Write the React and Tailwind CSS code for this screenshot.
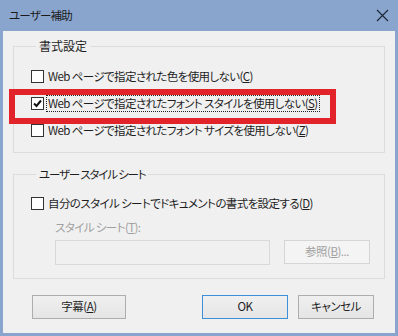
import React from 'react';

const font = { fontFamily: '"Segoe UI", "Noto Sans CJK JP", "Noto Sans", sans-serif' };

function Box({ checked, children, focused }) {
  return (
    <div className="flex items-center h-[16px]">
      <div className="w-[13px] h-[13px] border border-[#333] bg-white flex items-center justify-center shrink-0">
        {checked && (
          <svg width="9" height="9" viewBox="0 0 9 9">
            <path d="M1 4.5 L3.5 7 L8 1.5" fill="none" stroke="#111" strokeWidth="2" />
          </svg>
        )}
      </div>
      <span
        className={
          'ml-[2px] px-[1px] leading-[15px] text-[11.5px] tracking-[-0.6px] text-[#1e1e1e] border ' +
          (focused ? 'border-dotted border-[#222]' : 'border-transparent')
        }
      >
        {children}
      </span>
    </div>
  );
}

function Btn({ children, className = '', disabled }) {
  return (
    <div
      className={
        'h-[24px] flex items-center justify-center text-[11.5px] tracking-[-0.5px] border ' +
        (disabled
          ? 'border-[#d5d5d5] text-[#a0a0a0] bg-[#f4f4f4] '
          : 'text-[#1e1e1e] bg-gradient-to-b from-[#f0f0f0] to-[#e5e5e5] ') +
        className
      }
    >
      {children}
    </div>
  );
}

export default function App() {
  return (
    <div
      className="w-[398px] h-[336px] bg-[#8aa5cd] flex flex-col relative [font-feature-settings:'palt']"
      style={font}
    >
      {/* title bar */}
      <div className="h-[31px] flex items-center justify-between pl-[9px] pr-[9px] shrink-0">
        <span className="text-[11.5px] tracking-[-0.8px] text-[#1a1a1a]">ユーザー補助</span>
        <svg width="13" height="13" viewBox="0 0 13 13">
          <path d="M1 1 L12 12 M12 1 L1 12" stroke="#1e2a38" strokeWidth="1.2" fill="none" />
        </svg>
      </div>

      {/* body */}
      <div className="flex-1 mx-[3px] mb-[3px] bg-[#f0f0f0] px-[10px] pt-[7px] flex flex-col">
        <fieldset className="border border-[#dcdcdc] pl-[17px] pt-[14px] flex flex-col gap-[11px] h-[115px]">
          <legend className="ml-[5px] px-[3px] text-[12px] leading-[16px] text-[#1e1e1e]">書式設定</legend>
          <Box>Web ページで指定された色を使用しない(<u>C</u>)</Box>
          <Box checked focused>Web ページで指定されたフォント スタイルを使用しない(<u>S</u>)</Box>
          <Box>Web ページで指定されたフォント サイズを使用しない(<u>Z</u>)</Box>
        </fieldset>

        <fieldset className="mt-[13px] border border-[#dcdcdc] pl-[17px] pt-[13px] h-[113px] flex flex-col">
          <legend className="ml-[5px] px-[3px] text-[11.5px] tracking-[-1.2px] leading-[16px] text-[#1e1e1e]">
            ユーザー スタイル シート
          </legend>
          <Box>自分のスタイル シートでドキュメントの書式を設定する(<u>D</u>)</Box>
          <div className="ml-[24px] mt-[9px] text-[11.5px] tracking-[-0.6px] leading-[14px] text-[#a0a0a0]">
            スタイル シート(<u>T</u>):
          </div>
          <div className="ml-[24px] mt-[6px] flex gap-[14px]">
            <div className="w-[215px] h-[25px] border border-[#d9d9d9] bg-[#f0f0f0]" />
            <Btn disabled className="w-[86px]">参照(<u>B</u>)...</Btn>
          </div>
        </fieldset>

        <div className="mt-[16px] flex pl-[19px]">
          <Btn className="w-[94px] border-[#adadad]">字幕(<u>A</u>)</Btn>
          <Btn className="ml-[76px] w-[86px] border-[#3c8fd9]">OK</Btn>
          <Btn className="ml-[10px] w-[76px] border-[#adadad]">キャンセル</Btn>
        </div>
      </div>

      {/* red annotation */}
      <div className="absolute left-[9px] top-[89px] w-[327px] h-[35px] border-[6px] border-[#e2232a]" />
    </div>
  );
}
